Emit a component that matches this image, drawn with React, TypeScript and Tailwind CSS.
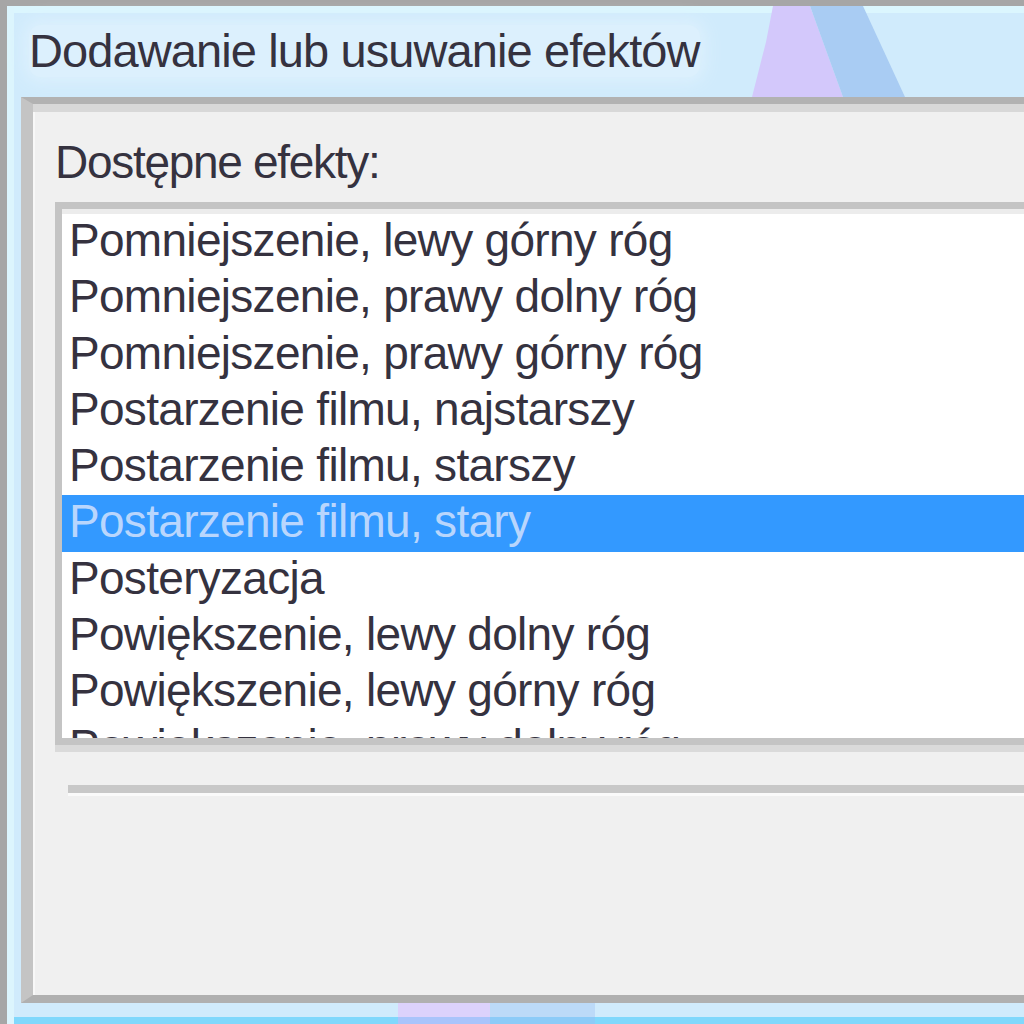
import React from "react";

const items = [
  "Pomniejszenie, lewy górny róg",
  "Pomniejszenie, prawy dolny róg",
  "Pomniejszenie, prawy górny róg",
  "Postarzenie filmu, najstarszy",
  "Postarzenie filmu, starszy",
  "Postarzenie filmu, stary",
  "Posteryzacja",
  "Powiększenie, lewy dolny róg",
  "Powiększenie, lewy górny róg",
  "Powiększenie, prawy dolny róg",
];

export default function App() {
  return (
    <div
      className="w-[1024px] h-[1024px] overflow-hidden bg-[#a6a6a6] pt-[6px] pl-[7px] flex flex-col"
      style={{ fontFamily: '"Liberation Sans", Arial, sans-serif' }}
    >
      <div className="relative flex-1 flex flex-col bg-[#d0ebfc] border-l-[7px] border-l-[#dcf5fd]">
        {/* aero glass decorations */}
        <svg
          className="absolute inset-0 pointer-events-none"
          width="1010"
          height="1018"
          viewBox="0 0 1010 1018"
        >
          <polygon points="759,0 796,0 829,91 738,91 752,36" fill="#d3c8fb" />
          <polygon points="796,0 849,0 891,91 829,91" fill="#a9ccf3" />
          <rect x="384" y="997" width="92" height="14" fill="#dcd2fc" />
          <rect x="476" y="997" width="105" height="14" fill="#bcdaf8" />
          <rect x="384" y="1011" width="92" height="7" fill="#a9c4fb" />
          <rect x="476" y="1011" width="105" height="7" fill="#8ccbf8" />
        </svg>

        {/* title bar */}
        <div className="h-[91px] shrink-0 flex flex-col">
          <div className="h-[7px] bg-[#dbf6fe]" />
          <div className="pl-[15px] pt-[12px]">
            <span className="relative inline-block text-[47px] leading-[52px] tracking-[-0.9px] text-[#35323f] rounded-[12px] bg-[#dcf0fd] shadow-[0_0_16px_6px_#dcf0fd]">
              Dodawanie lub usuwanie efektów
            </span>
          </div>
        </div>

        {/* content panel */}
        <div className="relative flex flex-col h-[906px] shrink-0 ml-[7px] bg-[#f0f0f0] border-t-[7px] border-t-[#b2b2b2] border-l-[12px] border-l-[#c4c4c4] border-b-[8px] border-b-[#b0b0b0]">
          <div className="h-[8px] bg-[#d8d8d8] shrink-0" />
          <div className="flex flex-col flex-1 border-l-[2px] border-l-[#f8f8f8] pl-[20px] pt-[22px]">
            <div className="text-[46px] leading-[56px] tracking-[-1.3px] text-[#35323f]">
              Dostępne efekty:
            </div>

            <div className="mt-[12px] bg-white border-t-[7px] border-l-[7px] border-b-[7px] border-[#c4c4c4] flex flex-col">
              <div className="h-[5px] bg-[#ececec]" />
              <div className="h-[524px] overflow-hidden flex flex-col">
                {items.map((t, i) => {
                  const sel = i === 5;
                  return (
                    <div
                      key={t}
                      className={
                        sel
                          ? "h-[56.25px] shrink-0 pl-[7px] bg-[#3399ff] text-[#b9d6fd] text-[46px] leading-[53px] tracking-[-0.7px] whitespace-nowrap"
                          : "h-[56.25px] shrink-0 pl-[7px] text-[#35323f] text-[46px] leading-[53px] tracking-[-0.7px] whitespace-nowrap"
                      }
                    >
                      {t}
                    </div>
                  );
                })}
              </div>
            </div>
            <div className="h-[7px] bg-[#dadada]" />

            <div className="mt-[33px] ml-[13px] h-[8px] bg-[#c8c8c8]" />
            <div className="ml-[13px] h-[3px] bg-[#fafafa]" />
          </div>
        </div>

        {/* bottom frame */}
        <div className="h-[14px] shrink-0" />
        <div className="h-[7px] shrink-0 bg-[#80d8fc]" />
      </div>
    </div>
  );
}
